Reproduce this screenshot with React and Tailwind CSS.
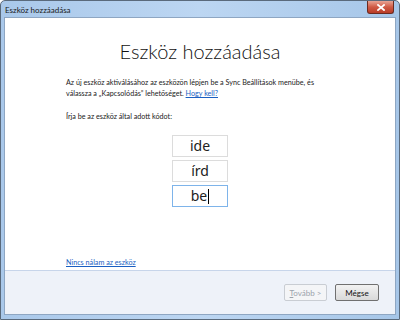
const font = { fontFamily: 'Lato, "Noto Sans", sans-serif' }

const CodeBox = ({ value, focused }) => (
    <div
        className={`w-[56px] h-[22px] flex items-center justify-center bg-white border text-[14px] text-[#222] leading-none ${focused ? 'border-[#7eb4ea]' : 'border-[#dcdcdc]'}`}
        style={{ fontFamily: '"Noto Sans", sans-serif' }}
    >
        <span>{value}</span>
        {focused && <span className="w-px h-[15px] bg-black ml-px" />}
    </div>
)

export default function App() {
    return (
        <div className="w-[400px] h-[320px] overflow-hidden" style={font}>
            <div className="w-full h-full flex flex-col bg-gradient-to-r from-[#a9c8ea] via-[#bcd6f2] to-[#a6c6e8] border border-[#5a6a7c] rounded-t-[5px]">
                {/* title bar */}
                <div className="h-[16px] flex items-center justify-between pl-[4px] pr-[5px]">
                    <span className="text-[8px] text-[#1a1a1a] leading-none pt-[2px]">Eszköz hozzáadása</span>
                    <div className="self-start w-[27px] h-[13px] rounded-b-[3px] border border-[#6b2a20] border-t-0 bg-gradient-to-b from-[#e7a394] via-[#cf5a45] to-[#b83b26] flex items-center justify-center">
                        <svg width="8" height="7" viewBox="0 0 8 7">
                            <path d="M1 1 L7 6 M7 1 L1 6" stroke="#fff" strokeWidth="1.8" strokeLinecap="square" />
                        </svg>
                    </div>
                </div>

                {/* client */}
                <div className="flex-1 flex flex-col mx-[3px] mb-[4px] border border-[#8ea6c2] bg-white">
                    <div className="flex-1 flex flex-col pl-[61px] pr-[20px] text-[7.2px] text-[#222]">
                        <h1 className="text-center text-[20px] font-light text-[#111] leading-none mt-[23px] mr-[41px]">Eszköz hozzáadása</h1>
                        <p className="mt-[16px] leading-[11px] whitespace-nowrap">
                            Az új eszköz aktiválásához az eszközön lépjen be a Sync Beállítások menübe, és
                            <br />
                            válassza a „Kapcsolódás” lehetőséget. <span className="text-[#1a5fc2] underline">Hogy kell?</span>
                        </p>
                        <p className="mt-[12px] leading-[11px]">Írja be az eszköz által adott kódot:</p>
                        <div className="flex flex-col items-center gap-[3px] mt-[13px] mr-[41px]">
                            <CodeBox value="ide" />
                            <CodeBox value="írd" />
                            <CodeBox value="be" focused />
                        </div>
                        <div className="flex-1" />
                        <span className="text-[#1a5fc2] underline mb-[2px] leading-[11px]">Nincs nálam az eszköz</span>
                    </div>
                    <div className="h-[44px] bg-[#eef2f9] border-t border-[#c7d5ea] flex items-center justify-end gap-[8px] pr-[16px] text-[8px]">
                        <div className="w-[43px] h-[17px] flex items-center justify-center border border-[#c9cdd3] rounded-[2px] bg-[#f4f5f7] text-[#9ba2ab]">
                            <span><span className="underline">T</span>ovább &gt;</span>
                        </div>
                        <div className="w-[44px] h-[17px] flex items-center justify-center border border-[#707070] rounded-[2px] bg-gradient-to-b from-[#f2f2f2] to-[#d9d9d9] text-[#111]">
                            Mégse
                        </div>
                    </div>
                </div>
            </div>
        </div>
    )
}
